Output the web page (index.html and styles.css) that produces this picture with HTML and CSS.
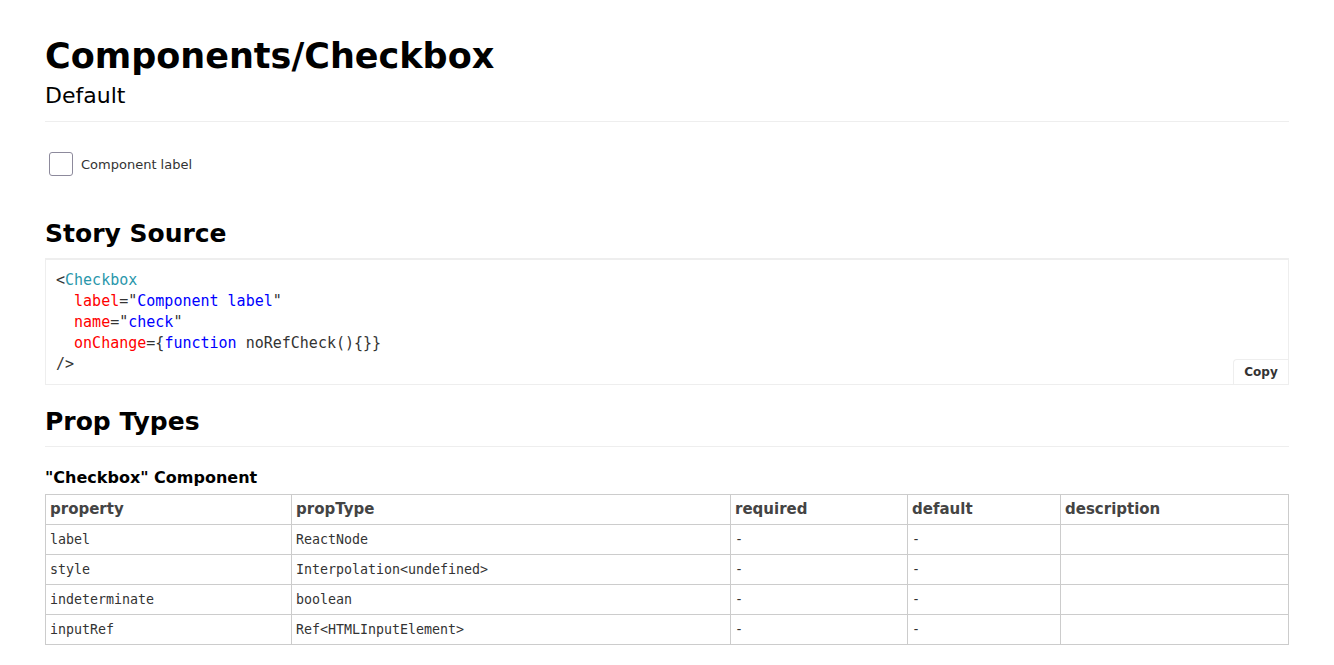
FILE: index.html
```html
<!DOCTYPE html>
<html lang="en">
<head>
<meta charset="utf-8">
<title>Components/Checkbox</title>
<link rel="stylesheet" href="styles.css">
</head>
<body>
<div class="page">
  <header class="story-header">
    <h1 class="title">Components/Checkbox</h1>
    <h2 class="subtitle">Default</h2>
  </header>

  <div class="preview">
    <label class="checkbox">
      <input type="checkbox" name="check" class="checkbox-input">
      <span class="checkbox-box"></span>
      <span class="checkbox-label">Component label</span>
    </label>
  </div>

  <h1 class="section-title">Story Source</h1>
  <div class="source">
<pre class="code"><span class="punc">&lt;</span><span class="tag">Checkbox</span>
  <span class="attr">label</span><span class="punc">="</span><span class="val">Component label</span><span class="punc">"</span>
  <span class="attr">name</span><span class="punc">="</span><span class="val">check</span><span class="punc">"</span>
  <span class="attr">onChange</span><span class="punc">={</span><span class="val">function</span> noRefCheck(){}<span class="punc">}</span>
<span class="punc">/&gt;</span></pre>
    <button class="copy" type="button">Copy</button>
  </div>

  <h1 class="section-title">Prop Types</h1>
  <h3 class="component-name">"Checkbox" Component</h3>
  <table class="props">
    <thead>
      <tr>
        <th class="col-prop">property</th>
        <th class="col-type">propType</th>
        <th class="col-req">required</th>
        <th class="col-def">default</th>
        <th class="col-desc">description</th>
      </tr>
    </thead>
    <tbody>
      <tr><td>label</td><td>ReactNode</td><td>-</td><td>-</td><td></td></tr>
      <tr><td>style</td><td>Interpolation&lt;undefined&gt;</td><td>-</td><td>-</td><td></td></tr>
      <tr><td>indeterminate</td><td>boolean</td><td>-</td><td>-</td><td></td></tr>
      <tr><td>inputRef</td><td>Ref&lt;HTMLInputElement&gt;</td><td>-</td><td>-</td><td></td></tr>
    </tbody>
  </table>
</div>
</body>
</html>
```
FILE: styles.css
```css
html, body {
  margin: 0;
  padding: 0;
  background: #fff;
}

body {
  font-family: "DejaVu Sans", "Liberation Sans", sans-serif;
  color: #000;
}

.page {
  padding: 35px 45px 20px 45px;
}

.story-header {
  border-bottom: 1px solid #eee;
  padding-bottom: 12px;
}

.title {
  font-size: 35px;
  line-height: 42px;
  font-weight: bold;
  margin: 0;
}

.subtitle {
  font-size: 22px;
  line-height: 26px;
  font-weight: normal;
  margin: 6px 0 0;
}

.preview {
  padding: 30px 0 0 4px;
  height: 67px;
}

.checkbox {
  display: flex;
  align-items: center;
  gap: 8px;
  cursor: pointer;
}

.checkbox-input {
  position: absolute;
  opacity: 0;
  width: 0;
  height: 0;
  margin: 0;
}

.checkbox-box {
  width: 22px;
  height: 22px;
  border: 1px solid #8d8a9c;
  border-radius: 3px;
  background: #fff;
}

.checkbox-label {
  font-size: 13px;
  color: #333;
}

.section-title {
  font-size: 25px;
  line-height: 30px;
  font-weight: bold;
  margin: 0;
  padding-bottom: 9px;
  border-bottom: 1px solid #eee;
}

.source {
  position: relative;
  border: 1px solid #eee;
  margin-bottom: 22px;
}

.code {
  margin: 0;
  padding: 10px 10px 9px;
  font-family: "DejaVu Sans Mono", "Liberation Mono", monospace;
  font-size: 15px;
  line-height: 21px;
  color: #333;
}

.tag { color: #2a97ab; }
.attr { color: #f00; }
.val { color: #00f; }
.punc { color: #333; }

.copy {
  position: absolute;
  right: 0;
  bottom: 0;
  width: 55px;
  height: 25px;
  padding: 0;
  border: 1px solid #eee;
  border-right: none;
  border-bottom: none;
  border-radius: 4px 0 0 0;
  background: #fff;
  font-family: "DejaVu Sans", sans-serif;
  font-size: 12px;
  font-weight: bold;
  color: #333;
}

.component-name {
  font-size: 16px;
  line-height: 20px;
  font-weight: bold;
  margin: 21px 0 6px;
}

.props {
  width: 100%;
  border-collapse: collapse;
  table-layout: fixed;
}

.props th,
.props td {
  border: 1px solid #ccc;
  height: 28px;
  padding: 0 4px 1px;
  text-align: left;
  vertical-align: middle;
}

.props th {
  font-size: 15px;
  font-weight: bold;
  color: #444;
}

.props td {
  font-family: "DejaVu Sans Mono", "Liberation Mono", monospace;
  font-size: 13.3px;
  color: #333;
}

.col-prop { width: 237px; }
.col-type { width: 430px; }
.col-req { width: 168px; }
.col-def { width: 144px; }
.col-desc { width: auto; }
```
